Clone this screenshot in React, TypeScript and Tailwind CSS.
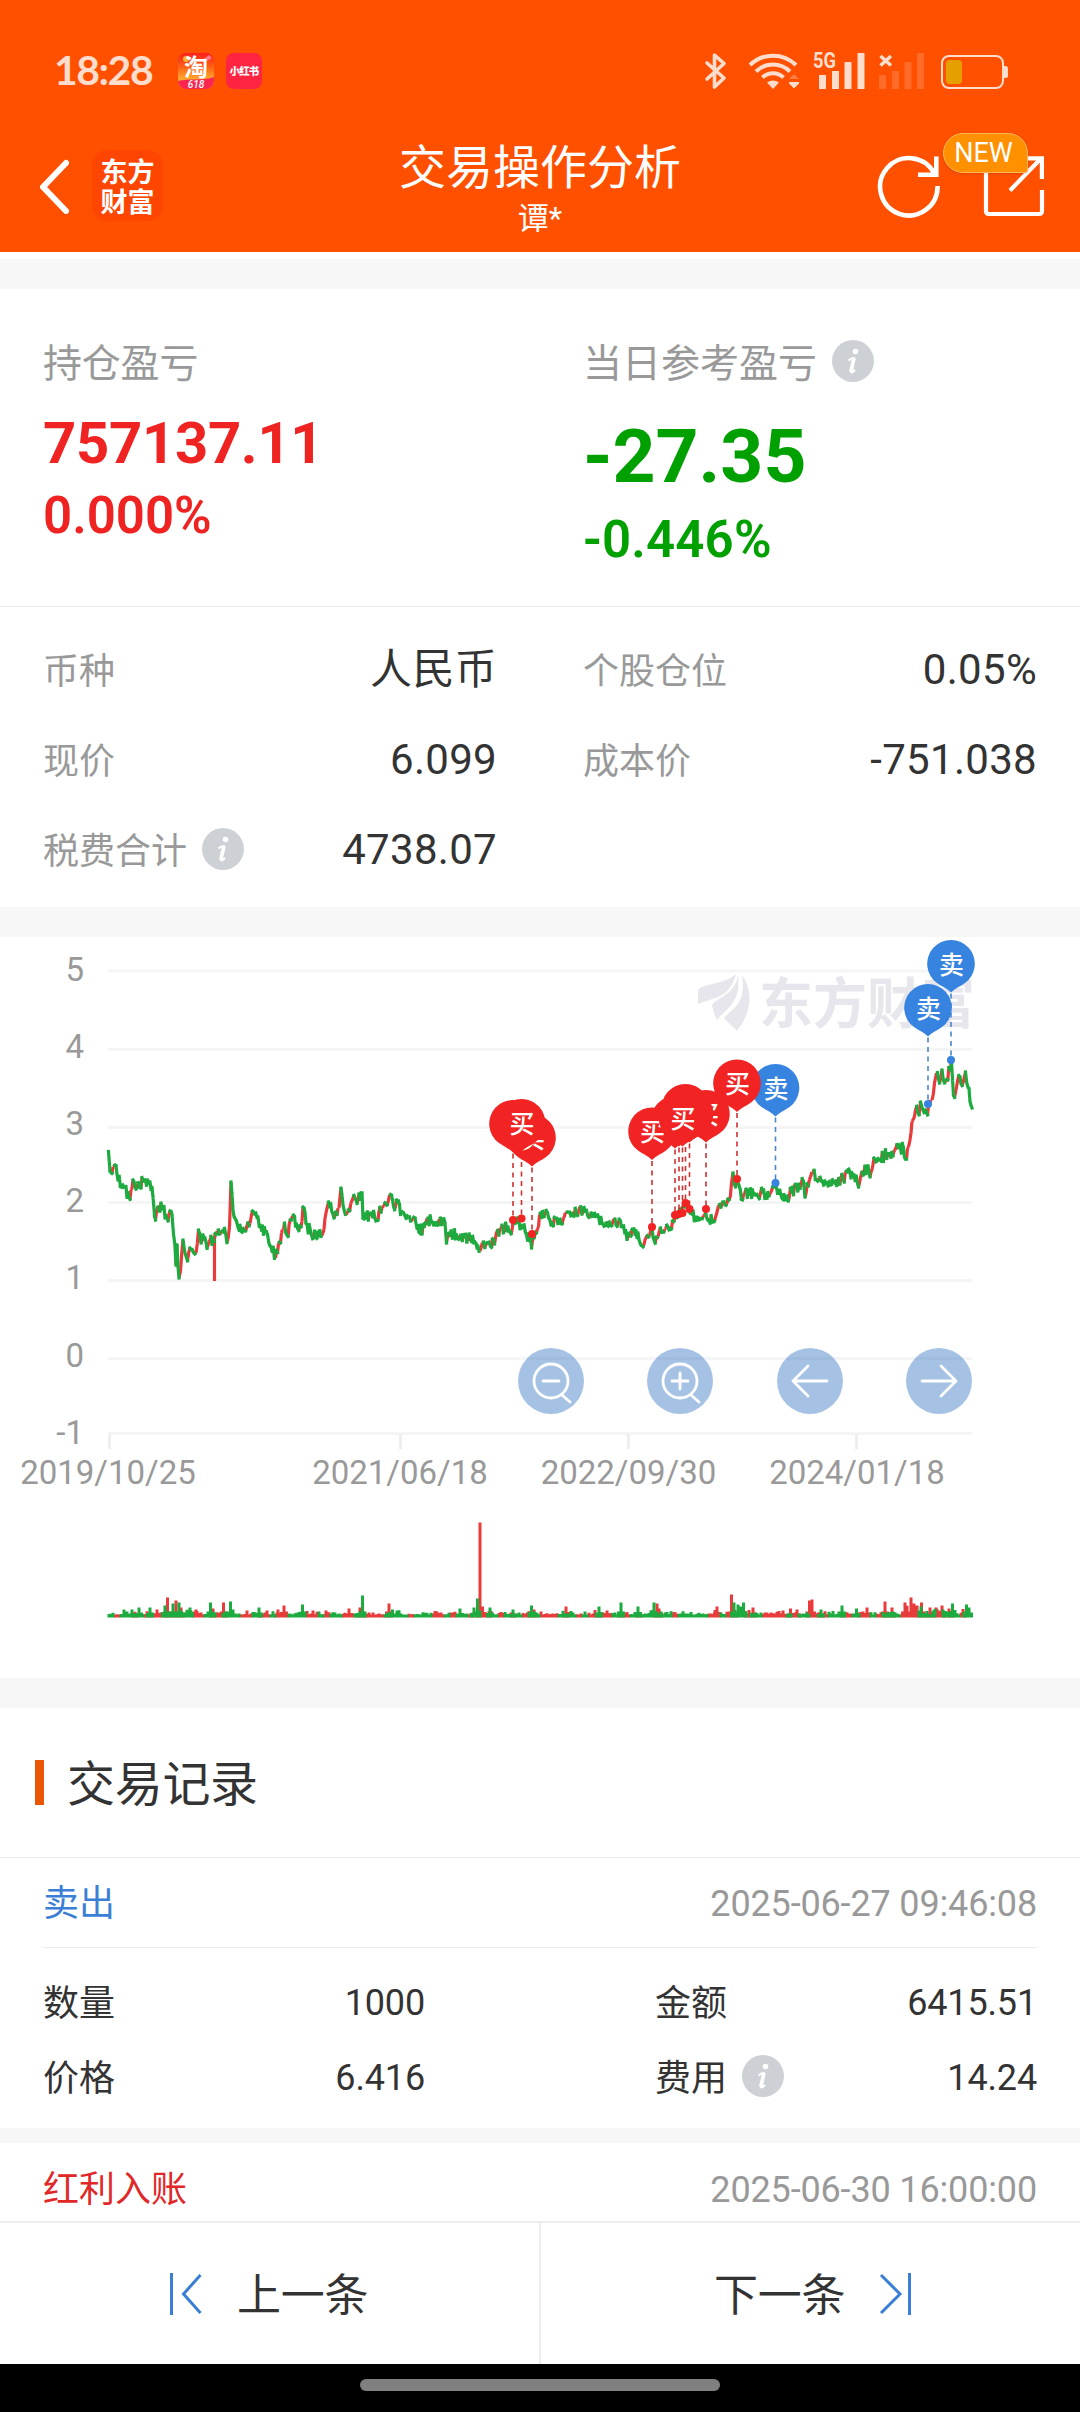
type Point = [number, number];

const GREEN = "#1cab3e";
const RED = "#e73b3c";

const gridLines = [
  { label: "5", y: 971, base: 981 },
  { label: "4", y: 1049.5, base: 1058 },
  { label: "3", y: 1127.5, base: 1134.5 },
  { label: "2", y: 1202.5, base: 1212 },
  { label: "1", y: 1280.5, base: 1289 },
  { label: "0", y: 1358.5, base: 1366.5 },
  { label: "-1", y: 1433.5, base: 1444 },
];

const dates = [
  { label: "2019/10/25", x: 109.5, text: 108 },
  { label: "2021/06/18", x: 400.5, text: 400 },
  { label: "2022/09/30", x: 628.5, text: 628.5 },
  { label: "2024/01/18", x: 856.5, text: 857 },
];

const prices: Point[] = [
  [108.5, 1151.5], [110, 1171], [115, 1165], [118, 1180], [124, 1187], [129, 1197], [134, 1182], [139, 1187],
  [143, 1181], [150, 1182], [153, 1197], [153.7, 1205], [155.5, 1220], [158, 1207], [163, 1207], [167, 1218],
  [172, 1215], [173.5, 1234], [176, 1265], [177, 1245], [179, 1278], [180.5, 1271], [183, 1240], [185, 1253],
  [187.5, 1261], [190, 1248], [196, 1253], [198.5, 1230], [201, 1243], [203, 1235], [208, 1245], [213, 1238],
  [218.5, 1230], [223.5, 1232], [228, 1239], [229.5, 1227], [231, 1182], [233, 1210], [236, 1220], [241, 1231],
  [249, 1226], [253.5, 1212], [258, 1217], [261.5, 1230], [266.5, 1232], [271, 1247], [275.5, 1258],
  [280.5, 1243], [284.5, 1223], [287, 1235], [293.5, 1215], [297.5, 1228], [301, 1227], [303, 1207],
  [306, 1223], [311.5, 1235], [322, 1235], [326, 1213], [328.5, 1202], [334, 1218], [339, 1208], [341, 1188],
  [343, 1205], [347.5, 1213], [353, 1198], [358, 1200], [362, 1193], [363, 1218], [371.5, 1213], [377, 1220],
  [382, 1207], [387, 1205], [389.5, 1195], [393.5, 1206], [397.5, 1202], [401.5, 1212], [409.5, 1217],
  [415, 1218], [419, 1232], [424, 1227], [428, 1218], [433.5, 1225], [440.5, 1218], [445, 1223], [446.5, 1243],
  [449, 1233], [461, 1235], [468, 1238], [475, 1242], [480, 1251], [483.5, 1242], [490.5, 1246], [495.5, 1238],
  [501, 1228], [508, 1227], [511, 1234], [513, 1222], [518, 1222], [523, 1227], [526.5, 1235], [530.5, 1237],
  [531.5, 1248], [533, 1237], [538.5, 1227], [540.5, 1213], [547.5, 1213], [551, 1225], [555.5, 1218],
  [559, 1223], [567.5, 1212], [583, 1211], [590, 1217], [593.5, 1215], [602, 1223], [610.5, 1224], [615, 1219],
  [622.5, 1227], [628, 1238], [633, 1230], [638, 1233], [643, 1247], [648.5, 1237], [652, 1228], [654, 1240],
  [660.5, 1228], [669, 1230], [675, 1218], [681, 1213], [685.5, 1203], [690, 1213], [698.5, 1218],
  [704.5, 1215], [708, 1220], [715.5, 1217], [717.5, 1210], [724, 1202], [729, 1200], [731.5, 1183],
  [733, 1173], [735.5, 1187], [738, 1183], [742.5, 1200], [748.5, 1190], [753.5, 1195], [760.5, 1193],
  [769, 1196], [775, 1185], [781, 1195], [785, 1200], [791.5, 1192], [796.5, 1187], [803.5, 1182], [805, 1197],
  [810.5, 1177], [813, 1172], [819, 1178], [826, 1183], [834.5, 1183], [843, 1178], [850, 1172], [854, 1175],
  [858.5, 1187], [862, 1172], [867, 1168], [870, 1177], [874, 1158], [879, 1160], [884.5, 1155], [895, 1150],
  [903.5, 1148], [905.5, 1159], [908.5, 1147], [911, 1133], [913, 1120], [915.5, 1110], [919, 1115],
  [920.5, 1102], [923, 1110], [927.5, 1115], [928.5, 1105], [932, 1100], [934.5, 1083], [936.5, 1073],
  [939.5, 1083], [942, 1070], [944.5, 1083], [950, 1070], [951.5, 1062], [953.5, 1095], [956.5, 1087],
  [960, 1077], [963, 1083], [965.5, 1072], [968, 1087], [972, 1108],
];

// [x, height, rising]
const volumePeaks: [number, number, boolean][] = [
  [124, 8, false], [132, 8, false], [139, 10, false], [150, 10, false], [157, 8, true], [165, 12, false],
  [167.5, 20, true], [173, 14, false], [176, 17, true], [179, 15, false], [181, 10, true], [190, 10, false],
  [196, 8, true], [210.5, 15, false], [213, 9, true], [223.5, 15, true], [230.5, 16, false], [233, 8, false],
  [259, 10, false], [278, 8, true], [284, 12, true], [302.5, 13, false], [326, 7, true], [349, 9, true],
  [360, 10, true], [362.5, 22, false], [389, 14, true], [392.5, 8, false], [460, 9, false], [474, 10, false],
  [477.5, 19, false], [480, 95, true], [482.5, 11, true], [490, 10, false], [513, 8, false], [531.5, 12, false],
  [534, 8, true], [566, 11, true], [599, 11, false], [621, 15, false], [638, 11, false], [654, 15, false],
  [657, 14, true], [659, 9, true], [717, 11, true], [731.5, 23, true], [734, 15, false], [738, 13, false],
  [741, 11, false], [743.5, 15, false], [753, 10, true], [790.5, 9, true], [797, 8, true], [809.5, 17, true],
  [812, 18, true], [821, 8, false], [842, 12, false], [856.5, 9, false], [867, 10, true], [885, 16, true],
  [892, 10, true], [905, 15, true], [911, 20, true], [914, 14, true], [917, 12, true], [921.5, 15, true],
  [930, 10, true], [936, 10, true], [942, 12, true], [952.5, 14, false], [966.5, 13, false], [969, 10, false],
];

type Pin = { x: number; y: number; dot: number; kind: "buy" | "sell"; label?: string };

// drawn in this order, later pins cover earlier ones
const pins: Pin[] = [
  { x: 532, y: 1138.5, dot: 1234, kind: "buy", label: "买" },
  { x: 513, y: 1124.5, dot: 1220, kind: "buy" },
  { x: 521.5, y: 1123.5, dot: 1218.5, kind: "buy", label: "买" },
  { x: 775.5, y: 1088.5, dot: 1183, kind: "sell", label: "卖" },
  { x: 706, y: 1114.5, dot: 1209, kind: "buy", label: "买" },
  { x: 689.5, y: 1114.5, dot: 1209, kind: "buy" },
  { x: 685.5, y: 1108.5, dot: 1203, kind: "buy" },
  { x: 679, y: 1118.5, dot: 1214, kind: "buy" },
  { x: 675, y: 1120.5, dot: 1215, kind: "buy" },
  { x: 652, y: 1132, dot: 1227, kind: "buy", label: "买" },
  { x: 682.5, y: 1118.5, dot: 1213, kind: "buy", label: "买" },
  { x: 737, y: 1084, dot: 1179, kind: "buy", label: "买" },
  { x: 951, y: 964.5, dot: 1060, kind: "sell", label: "卖" },
  { x: 928, y: 1008.5, dot: 1104, kind: "sell", label: "卖" },
];

function noise(n: number) {
  const v = Math.sin(n * 127.1) * 43758.5453;
  return v - Math.floor(v);
}

function buildPrice() {
  const pts: Point[] = [];
  for (let i = 0; i < prices.length - 1; i++) {
    const [x0, y0] = prices[i];
    const [x1, y1] = prices[i + 1];
    const steps = Math.max(1, Math.round((x1 - x0) / 1.1));
    for (let s = 0; s < steps; s++) {
      const t = s / steps;
      const jitter = s === 0 ? 0 : (noise(i * 13 + s) - 0.5) * 11;
      pts.push([x0 + (x1 - x0) * t, y0 + (y1 - y0) * t + jitter]);
    }
  }
  pts.push(prices[prices.length - 1]);

  let up = "M214.5 1240V1281";
  let down = "";
  for (let i = 1; i < pts.length; i++) {
    const [x0, y0] = pts[i - 1];
    const [x1, y1] = pts[i];
    const seg = `M${x0.toFixed(1)} ${y0.toFixed(1)}L${x1.toFixed(1)} ${y1.toFixed(1)}`;
    if (y1 < y0) up += seg;
    else down += seg;
  }
  return { up, down };
}

function buildVolume() {
  let up = "";
  let down = "";
  for (let i = 0; i < 432; i++) {
    const x = 109 + i * 2;
    const busy = (x > 160 && x < 200) || x > 880;
    const h = 3 + noise(i + 5) * noise(i + 91) * (busy ? 10 : 5);
    const bar = `M${x} 1617.5v${(-h).toFixed(1)}`;
    if (noise(Math.floor(i / 3) + 300) > 0.55) up += bar;
    else down += bar;
  }
  for (const [x, h, rising] of volumePeaks) {
    const bar = `M${x} 1617.5v${-h}`;
    const foot = `M${x - 2.5} 1617.5v${-Math.min(h * 0.45, 6)}M${x + 2.5} 1617.5v${-Math.min(h * 0.5, 6)}`;
    if (rising) up += bar + foot;
    else down += bar + foot;
  }
  return { up, down };
}

const priceLine = buildPrice();
const volume = buildVolume();

function InfoIcon() {
  return (
    <span className="flex h-[42px] w-[42px] shrink-0 items-center justify-center rounded-full bg-[#cdd1d6]">
      <svg width="42" height="42" viewBox="0 0 42 42">
        <circle cx="23.5" cy="11.5" r="2.8" fill="#fff" />
        <path d="M16.500 20.500c1.600-1.600 3.500-2.500 5.500-2.500l-3 13c-.4 2.200 1.600 1.900 4-1.200" fill="none" stroke="#fff" strokeWidth="2" strokeLinejoin="round" />
        <path d="M22 18l-3.200 14" stroke="#fff" strokeWidth="3.600" />
      </svg>
    </span>
  );
}

function StatusBar() {
  return (
    <div className="flex h-[90px] items-end justify-between pl-[54px] pr-[71px]">
      <div className="flex h-[38px] items-center">
        <span className="w-[124px] pb-[3px] font-['Lato'] text-[41px] font-bold leading-[38px] tracking-[-1.500px] text-[#ffdccc]">
          18:28
        </span>
        <svg width="36" height="36" viewBox="0 0 36 36" className="mr-3">
          <defs>
            <linearGradient id="tao" x1="0" y1="0" x2="0" y2="1">
              <stop offset="0" stopColor="#fb1f1c" />
              <stop offset="0.4" stopColor="#ff6417" />
              <stop offset="0.7" stopColor="#ffa52d" />
            </linearGradient>
          </defs>
          <rect width="36" height="36" rx="8" fill="url(#tao)" />
          <circle cx="8" cy="6" r="3" fill="#ffb52d" />
          <path d="M26 6l5-4 3 3-5 3z" fill="#ff7b91" />
          <path d="M0 28c10-3 25 0 36-4v4a8 8 0 0 1-8 8H8a8 8 0 0 1-8-8z" fill="#fb2650" />
          <text x="18" y="22.500" textAnchor="middle" className="font-['Noto_Sans_CJK_SC',sans-serif] text-[24px] font-bold" fill="#fff">
            淘
          </text>
          <text x="18" y="35" textAnchor="middle" className="font-['Roboto',sans-serif] text-[10px] font-medium italic" fill="#fff">
            618
          </text>
        </svg>
        <span className="flex h-9 w-9 items-center justify-center whitespace-nowrap rounded-[8px] bg-[#ff2442] font-['Noto_Sans_CJK_SC',sans-serif] text-[10.500px] font-black tracking-[-0.8px] text-white">
          小红书
        </span>
      </div>

      <svg width="304" height="38" viewBox="705 51 304 38" className="overflow-visible" fill="none" stroke="#ffdccc">
        <path d="M707 62l17 15-9.500 9V54l9.500 8.500L707 78" strokeWidth="3.600" strokeLinejoin="round" strokeLinecap="round" />
        <path d="M750 64a33 33 0 0 1 46 0M756 70.500a24 24 0 0 1 34 0M762.500 76.500a15 15 0 0 1 21 0" strokeWidth="4" />
        <path d="M767 81.500q6-4 12 0l-6 6.500z" fill="#ffdccc" stroke="none" />
        <path d="M789 78h10l-5-5z" fill="#ff7d42" stroke="none" />
        <path d="M789 81h10v1.500l-5 5-5-5z" fill="#ffdccc" stroke="none" />
        <text x="813" y="67" textLength="23" lengthAdjust="spacingAndGlyphs" className="font-['Roboto',sans-serif] text-[22px] font-bold" fill="#ffdccc" stroke="none">
          5G
        </text>
        <path d="M822.500 88V74M835.500 88V70M848 88V61M861 88V52" strokeWidth="7" />
        <path d="M880.500 55l10.500 9.500M891 55l-10.500 9.500" strokeWidth="3.500" />
        <path d="M882.500 88V74M895.500 88V70M908 88V61M920.500 88V52" strokeWidth="7" stroke="#ff6b29" />
        <rect x="942" y="55" width="61" height="32" rx="7" strokeWidth="2" />
        <path d="M1004 65h1.500q2.500 0 2.500 2.500v7q0 2.500-2.500 2.500H1004z" fill="#ffdccc" stroke="none" />
        <rect x="946" y="59" width="16" height="24" rx="4" fill="#e5a000" stroke="none" />
      </svg>
    </div>
  );
}

function TitleBar() {
  return (
    <div className="grid h-[162px] grid-cols-[1fr_auto_1fr] pl-[38px] pr-[34px]">
      <div className="mt-[60px] flex h-[71px] items-center">
        <svg width="32" height="56" viewBox="0 0 32 56" className="mr-[22px]" fill="none" stroke="#fff" strokeWidth="6" strokeLinecap="round" strokeLinejoin="round">
          <path d="M28 5L5 29l23 24" />
        </svg>
        <div className="flex h-[71px] w-[71px] flex-col items-center justify-center rounded-[15px] bg-[#ff4502] font-['Noto_Sans_CJK_SC',sans-serif] text-[27px] font-bold leading-[30px] text-white">
          <span>东方</span>
          <span>财富</span>
        </div>
      </div>

      <div className="-ml-1 pt-[49px] text-center text-white">
        <h1 className="text-[47px] leading-[58px]">交易操作分析</h1>
        <p className="mt-1 text-[31px] leading-[36px]">谭*</p>
      </div>

      <div className="relative flex justify-end gap-[42px] pt-[62px]">
        <svg width="64" height="68" viewBox="877 152 64 68" fill="none" stroke="#fff" strokeWidth="4.600">
          <path d="M937.500 186A28.700 28.700 0 1 1 934 173" />
          <path d="M936.300 156.500v18.300H918" />
        </svg>
        <svg width="64" height="68" viewBox="984 152 64 68" className="-mr-px" fill="none" stroke="#fff" strokeWidth="4.200">
          <path d="M1043 190v21q0 3-3 3h-50q-3 0-3-3v-52" strokeLinejoin="round" />
          <path d="M1026 158.300h16.900V179M1011 190.500l31-32" />
        </svg>
        <span className="absolute right-[18px] top-[43px] flex h-[40px] w-[85px] items-center justify-center rounded-[20px] rounded-br-[3px] border border-[#ffb65c] bg-[#ff9000] pr-1 text-[27px] leading-[38px] text-white shadow-sm">
          NEW
        </span>
      </div>
    </div>
  );
}

function Summary() {
  return (
    <section>
      <div className="grid h-[317px] grid-cols-[540px_540px] pt-[50px]">
        <div className="pl-[43px]">
          <p className="text-[39px] leading-[50px] tracking-[-0.2px] text-[#999]">持仓盈亏</p>
          <p className="mt-[19px] text-[58px] font-bold leading-[70px] tracking-[-0.3px] text-[#f02323]">757137.11</p>
          <p className="mt-[8px] text-[51px] font-semibold leading-[60px] text-[#f02323]">0.000%</p>
        </div>
        <div className="pl-[43px]">
          <div className="flex items-center text-[39px] leading-[50px] text-[#999]">
            当日参考盈亏
            <span className="-mt-[7px] ml-[15px] flex">
              <InfoIcon />
            </span>
          </div>
          <p className="mt-[23px] text-[75px] font-bold leading-[88px] text-[#00a000]">-27.35</p>
          <p className="mt-[10px] text-[51px] font-semibold leading-[60px] tracking-[0.2px] text-[#00a000]">-0.446%</p>
        </div>
      </div>

      <div className="grid h-[301px] auto-rows-[90px] grid-cols-[454px_454px] gap-x-[86px] border-t border-[#ededed] px-[43px] pt-[18px]">
        <Field label="币种" value="人民币" />
        <Field label="个股仓位" value="0.05%" />
        <Field label="现价" value="6.099" />
        <Field label="成本价" value="-751.038" />
        <Field label="税费合计" value="4738.07" info />
      </div>
    </section>
  );
}

function Field({ label, value, info }: { label: string; value: string; info?: boolean }) {
  return (
    <div className="flex items-center justify-between">
      <span className="flex items-center gap-[15px] text-[36px] leading-[48px] text-[#999]">
        <span className="pt-[3px]">{label}</span>
        {info && (
          <span className="-mt-[3px] flex">
            <InfoIcon />
          </span>
        )}
      </span>
      <span className="text-[42px] leading-[50px] tracking-[0.3px] text-[#333]">{value}</span>
    </div>
  );
}

function TradePin({ pin }: { pin: Pin }) {
  return (
    <g>
      <path
        d={`M${pin.x} ${pin.y + 28}c-4-4-9-6-14-9.500a23.800 23.800 0 1 1 28 0c-5 3.500-10 5.500-14 9.500z`}
        fill={pin.kind === "buy" ? "#f22323" : "#3683e0"}
      />
      {pin.label && (
        <text x={pin.x + 0.5} y={pin.y + 9} textAnchor="middle" className="text-[25px] font-medium" fill="#fff">
          {pin.label}
        </text>
      )}
    </g>
  );
}

function Chart() {
  return (
    <svg width="1080" height="741" viewBox="0 937 1080 741" className="block">
      {gridLines.map((line) => (
        <g key={line.label}>
          <path d={`M108 ${line.y}H972`} stroke="#f5f5f5" strokeWidth="3" />
          <text x="84" y={line.base} textAnchor="end" className="text-[33px]" fill="#999">
            {line.label}
          </text>
        </g>
      ))}
      {dates.map((date) => (
        <g key={date.label}>
          <path d={`M${date.x} 1434V1449`} stroke="#eee" strokeWidth="3" />
          <text x={date.text} y="1484" textAnchor="middle" className="text-[33px]" fill="#999">
            {date.label}
          </text>
        </g>
      ))}

      <g fill="#e6e6ec">
        <path d="M736 974c-9 10-38 10-38 17v13c17-7 32-6 38-30z" />
        <path d="M738 975c-3 20-21 22-26 30 1 6 3 11 5 15 10-13 24-16 21-45z" />
        <path d="M742 975c4 29-8 32-18 43 4 5 10 9 13 13 11-14 19-36 5-56z" />
        <text x="759" y="1023" textLength="216" lengthAdjust="spacingAndGlyphs" className="text-[55px] font-bold">
          东方财富
        </text>
      </g>

      <g fill="none" strokeWidth="3.200">
        <path d={priceLine.up} stroke={RED} />
        <path d={priceLine.down} stroke={GREEN} strokeLinecap="square" />
      </g>
      <path d={volume.up} stroke={RED} strokeWidth="3" />
      <path d={volume.down} stroke={GREEN} strokeWidth="3" />

      {pins.map((pin) => (
        <g key={pin.x} fill={pin.kind === "buy" ? "#f22323" : "#3683e0"}>
          <path
            d={`M${pin.x} ${pin.y + 29}V${pin.dot}`}
            stroke={pin.kind === "buy" ? "#cf3030" : "#4a88c8"}
            strokeWidth="1.600"
            strokeDasharray="5 4.500"
          />
          <circle cx={pin.x} cy={pin.dot} r="4" />
        </g>
      ))}
      {pins.map((pin) => (
        <TradePin key={pin.x} pin={pin} />
      ))}

      {[551, 680, 810, 939].map((x) => (
        <circle key={x} cx={x} cy="1381" r="33" fill="#3778c3" fillOpacity="0.45" />
      ))}
      <g fill="none" stroke="#fff" strokeWidth="2.800" strokeLinecap="round" strokeLinejoin="round">
        <circle cx="551" cy="1381" r="17" />
        <path d="M543 1381h16M562 1395l8 7" />
        <circle cx="680" cy="1381" r="17" />
        <path d="M672 1381h16M680 1373v16M691 1395l8 7" />
        <path d="M827 1381h-34M808 1366l-15 15 15 15" />
        <path d="M922 1381h34M941 1366l15 15-15 15" />
      </g>
    </svg>
  );
}

function Records() {
  return (
    <section>
      <div className="flex h-[149px] items-center pl-[35px]">
        <span className="h-[45px] w-[9px] bg-[#ea5504]" />
        <h2 className="ml-[23px] pt-[5px] text-[48px] leading-[60px] tracking-[-0.3px] text-[#333]">交易记录</h2>
      </div>

      <div className="h-[271px] border-t border-[#ededed] px-[43px]">
        <div className="flex h-[90px] items-center justify-between border-b border-[#ededed] pt-[3px] text-[36px]">
          <span className="text-[#3a7fd5]">卖出</span>
          <span className="tracking-[-0.15px] text-[#999]">2025-06-27 09:46:08</span>
        </div>
        <div className="grid auto-rows-[75px] grid-cols-[382px_382px] justify-between pt-[18px] text-[36px] text-[#333]">
          <div className="flex items-center justify-between">
            <span className="pt-px">数量</span>
            <span className="-mt-px tracking-[-0.15px]">1000</span>
          </div>
          <div className="flex items-center justify-between">
            <span className="pt-px">金额</span>
            <span className="-mt-px tracking-[-0.15px]">6415.51</span>
          </div>
          <div className="flex items-center justify-between">
            <span className="pt-px">价格</span>
            <span className="-mt-px tracking-[-0.15px]">6.416</span>
          </div>
          <div className="flex items-center justify-between">
            <span className="flex items-center gap-[15px]">
              <span className="pt-px">费用</span>
              <span className="-mt-[5px] flex">
                <InfoIcon />
              </span>
            </span>
            <span className="-mt-px tracking-[-0.15px]">14.24</span>
          </div>
        </div>
      </div>

      <div className="h-[15px] bg-[#f7f7f7]" />
      <div className="flex h-[78px] items-center justify-between px-[43px] pt-[16px] text-[36px]">
        <span className="text-[#e02828]">红利入账</span>
        <span className="tracking-[-0.15px] text-[#999]">2025-06-30 16:00:00</span>
      </div>
    </section>
  );
}

function BottomNav() {
  return (
    <nav className="grid h-[143px] grid-cols-[541px_539px] border-t-2 border-[#ededed] text-[44px] text-[#333]">
      <button className="flex items-center border-r-2 border-[#ededed] pl-[170px]">
        <svg width="32" height="44" viewBox="0 0 32 44" className="mr-[35px]" fill="none" stroke="#3a7fd5" strokeWidth="3">
          <path d="M1.500 1v42M30.500 3L13.500 22l17 19" />
        </svg>
        <span className="pt-[4px] tracking-[-0.3px]">上一条</span>
      </button>
      <button className="flex items-center pl-[173px]">
        <span className="pt-[4px] tracking-[-0.3px]">下一条</span>
        <svg width="32" height="44" viewBox="0 0 32 44" className="ml-[34px]" fill="none" stroke="#3a7fd5" strokeWidth="3">
          <path d="M30.500 1v42M2 3l19 19L2 41" />
        </svg>
      </button>
    </nav>
  );
}

export default function App() {
  return (
    <div className="h-[2412px] w-[1080px] overflow-hidden bg-white font-['Roboto','Noto_Sans_CJK_SC',sans-serif]">
      <header className="h-[252px] bg-[#ff5000]">
        <StatusBar />
        <TitleBar />
      </header>
      <div className="mt-[7px] h-[30px] bg-[#f7f7f7]" />
      <Summary />
      <div className="h-[30px] bg-[#f7f7f7]" />
      <Chart />
      <div className="h-[30px] bg-[#f7f7f7]" />
      <Records />
      <BottomNav />
      <div className="flex h-12 justify-center bg-black pt-[15px]">
        <div className="h-3 w-[360px] rounded-full bg-[#808080]" />
      </div>
    </div>
  );
}
